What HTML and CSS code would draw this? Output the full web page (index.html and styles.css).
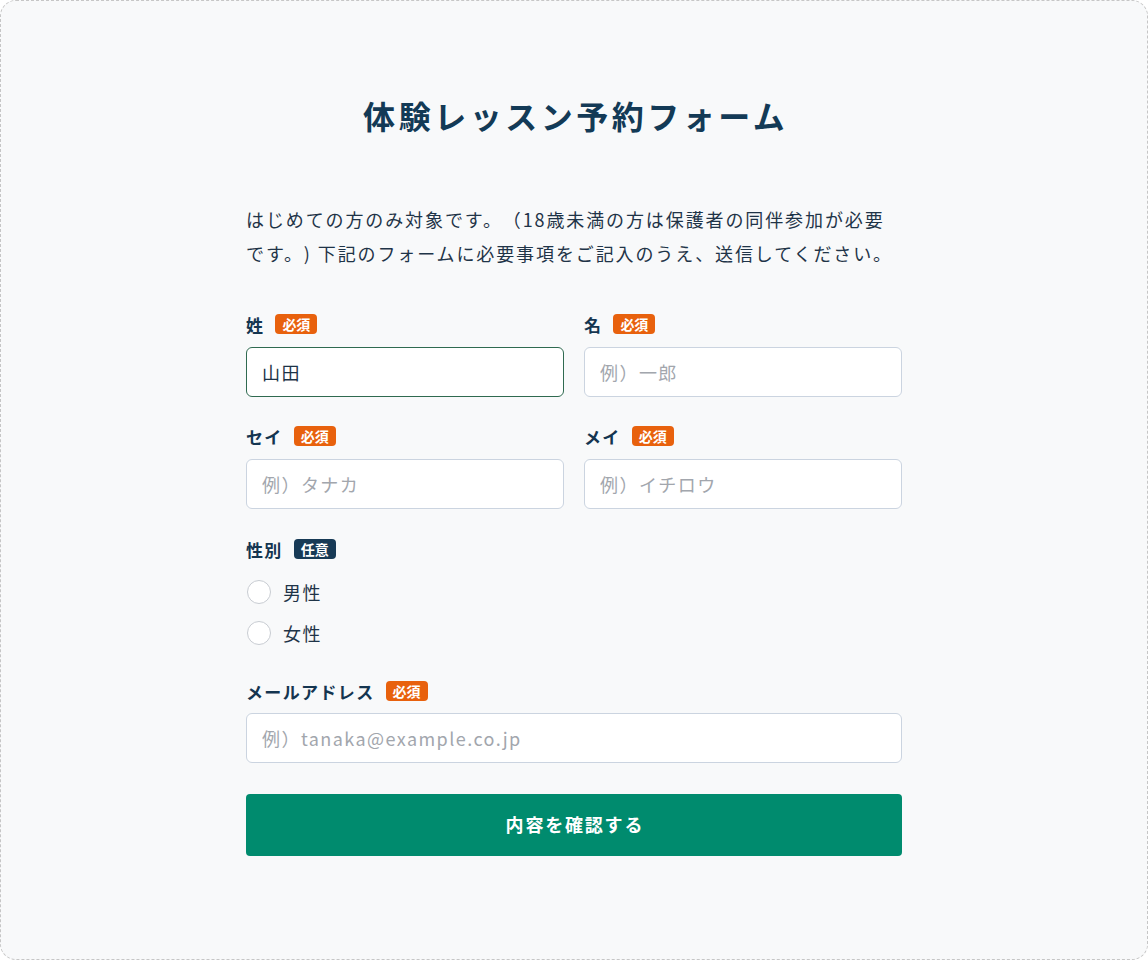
FILE: index.html
```html
<!DOCTYPE html>
<html lang="ja">
<head>
<meta charset="utf-8">
<title>体験レッスン予約フォーム</title>
<link rel="stylesheet" href="styles.css">
</head>
<body>
<div class="page">
  <div class="form-wrap">
    <h1 class="title">体験レッスン予約フォーム</h1>
    <p class="lead">はじめての方のみ対象です。（18歳未満の方は保護者の同伴参加が必要です。) 下記のフォームに必要事項をご記入のうえ、送信してください。</p>

    <form class="form">
      <div class="grid">
        <div class="field">
          <div class="label-row"><span class="label">姓</span><span class="badge badge-req">必須</span></div>
          <input class="input is-active" type="text" value="山田">
        </div>
        <div class="field">
          <div class="label-row"><span class="label">名</span><span class="badge badge-req">必須</span></div>
          <input class="input" type="text" placeholder="例）一郎">
        </div>
        <div class="field">
          <div class="label-row"><span class="label">セイ</span><span class="badge badge-req">必須</span></div>
          <input class="input" type="text" placeholder="例）タナカ">
        </div>
        <div class="field">
          <div class="label-row"><span class="label">メイ</span><span class="badge badge-req">必須</span></div>
          <input class="input" type="text" placeholder="例）イチロウ">
        </div>
      </div>

      <div class="field field-gender">
        <div class="label-row"><span class="label">性別</span><span class="badge badge-opt">任意</span></div>
        <div class="radios">
          <label class="radio"><span class="radio-circle"></span><span class="radio-text">男性</span></label>
          <label class="radio"><span class="radio-circle"></span><span class="radio-text">女性</span></label>
        </div>
      </div>

      <div class="field field-email">
        <div class="label-row"><span class="label">メールアドレス</span><span class="badge badge-req">必須</span></div>
        <input class="input" type="text" placeholder="例）tanaka@example.co.jp">
      </div>

      <button class="submit" type="button">内容を確認する</button>
    </form>
  </div>
</div>
</body>
</html>
```

FILE: styles.css
```css
* {
  box-sizing: border-box;
}

html, body {
  margin: 0;
  padding: 0;
  background: #ffffff;
}

body {
  font-family: "Noto Sans CJK JP", "Noto Sans", "Liberation Sans", sans-serif;
  color: #1c3347;
  text-spacing-trim: space-all;
}

.page {
  min-height: 960px;
  border: 1px dashed #c6c6c6;
  border-radius: 16px;
  background: #f8f9fa;
  display: flex;
  justify-content: center;
  padding-top: 91px;
}

.form-wrap {
  width: 656px;
}

.title {
  margin: 0;
  font-size: 32px;
  line-height: 46px;
  font-weight: 700;
  letter-spacing: 0.11em;
  padding-left: 0.11em;
  text-align: center;
  color: #133a56;
}

.lead {
  margin: 64px 0 0;
  font-size: 18px;
  line-height: 34px;
  letter-spacing: 0.105em;
  color: #1f3448;
  text-spacing-trim: space-all;
}

.form {
  margin-top: 43px;
  display: flex;
  flex-direction: column;
}

.grid {
  display: grid;
  grid-template-columns: 1fr 1fr;
  column-gap: 20px;
  row-gap: 28px;
}

.field {
  display: flex;
  flex-direction: column;
}

.label-row {
  display: flex;
  align-items: center;
  gap: 11px;
  height: 22px;
  margin-bottom: 12px;
}

.label {
  font-size: 17px;
  font-weight: 700;
  letter-spacing: 0.08em;
  color: #143550;
}

.badge {
  display: inline-flex;
  align-items: center;
  justify-content: center;
  height: 20px;
  padding: 0 7px;
  border-radius: 4px;
  font-size: 14px;
  font-weight: 700;
  color: #ffffff;
  line-height: 1;
}

.badge-req {
  background: #e8610d;
}

.badge-opt {
  background: #173a56;
}

.input {
  height: 50px;
  width: 100%;
  border: 1px solid #cbd4e0;
  border-radius: 6px;
  background: #ffffff;
  padding: 0 15px;
  font-family: inherit;
  font-size: 18px;
  letter-spacing: 0.08em;
  color: #1c3347;
  outline: none;
}

.input::placeholder {
  color: #a2a6ad;
}

.input.is-active {
  border-color: #2f6a50;
}

.field-gender {
  margin-top: 29px;
}

.field-gender .label-row {
  margin-bottom: 17px;
}

.radios {
  display: flex;
  flex-direction: column;
  gap: 11px;
}

.radio {
  display: flex;
  align-items: center;
  height: 30px;
  gap: 12px;
  padding-left: 1px;
}

.radio-circle {
  width: 24px;
  height: 24px;
  border-radius: 50%;
  border: 1.5px solid #c8ccd2;
  background: #ffffff;
}

.radio-text {
  font-size: 18px;
  letter-spacing: 0.08em;
  color: #1f3448;
}

.field-email {
  margin-top: 32px;
}

.field-email .label-row {
  margin-bottom: 11px;
}

.submit {
  margin-top: 31px;
  height: 62px;
  width: 100%;
  border: none;
  border-radius: 4px;
  background: #008b6e;
  color: #ffffff;
  font-family: inherit;
  font-size: 18px;
  font-weight: 700;
  letter-spacing: 0.1em;
  padding: 0 0 3px 0.1em;
  cursor: pointer;
}
```
